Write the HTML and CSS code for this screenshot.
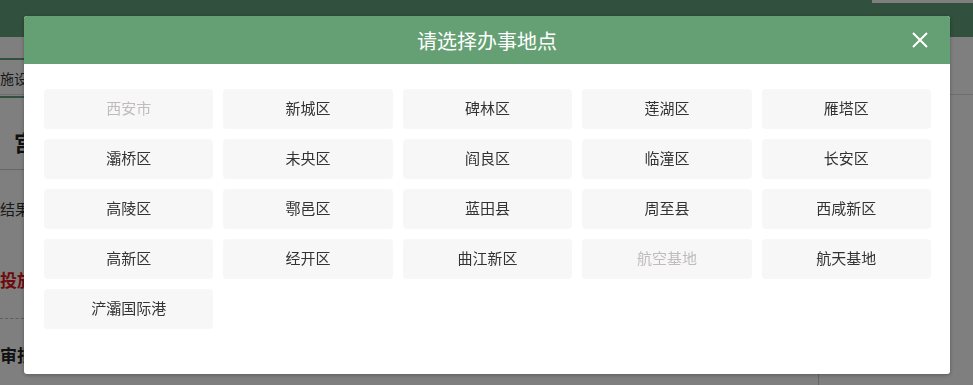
FILE: index.html
```html
<!DOCTYPE html>
<html lang="zh-CN">
<head>
    <meta charset="UTF-8">
    <meta name="viewport" content="width=device-width, initial-scale=1.0">
    <title>请选择办事地点</title>
    <link rel="stylesheet" href="styles.css">
</head>
<body>
    <!-- 背景页面 -->
    <div class="page">
        <div class="top-strip"></div>
        <header class="page-header"></header>
        <div class="tab-row">
            <span class="tab">施设</span>
        </div>
        <div class="page-body">
            <div class="page-main">
                <h3 class="big-title">宫</h3>
                <p class="row-text">结果</p>
                <p class="red-text">投施</p>
                <p class="bold-text">审批</p>
            </div>
            <div class="page-side"></div>
        </div>
    </div>

    <!-- 遮罩层 -->
    <div class="mask"></div>

    <!-- 弹窗 -->
    <div class="dialog">
        <div class="dialog-header">
            <h2>请选择办事地点</h2>
            <span class="dialog-close">
                <svg width="18" height="18" viewBox="0 0 18 18">
                    <path d="M2 2 L16 16 M16 2 L2 16" stroke="#fff" stroke-width="2" fill="none"/>
                </svg>
            </span>
        </div>
        <div class="dialog-body">
            <ul class="area-list">
                <li class="area disabled">西安市</li>
                <li class="area">新城区</li>
                <li class="area">碑林区</li>
                <li class="area">莲湖区</li>
                <li class="area">雁塔区</li>
                <li class="area">灞桥区</li>
                <li class="area">未央区</li>
                <li class="area">阎良区</li>
                <li class="area">临潼区</li>
                <li class="area">长安区</li>
                <li class="area">高陵区</li>
                <li class="area">鄠邑区</li>
                <li class="area">蓝田县</li>
                <li class="area">周至县</li>
                <li class="area">西咸新区</li>
                <li class="area">高新区</li>
                <li class="area">经开区</li>
                <li class="area">曲江新区</li>
                <li class="area disabled">航空基地</li>
                <li class="area">航天基地</li>
                <li class="area">浐灞国际港</li>
            </ul>
        </div>
    </div>
</body>
</html>
```

FILE: styles.css
```css
* {
    box-sizing: border-box;
    margin: 0;
    padding: 0;
}

body {
    font-family: "Microsoft YaHei", "Noto Sans CJK SC", sans-serif;
    background: #fff;
    height: 385px;
    overflow: hidden;
}

/* 背景页面 */
.page {
    position: relative;
    height: 385px;
}

.top-strip {
    position: absolute;
    top: 0;
    right: 0;
    width: 101px;
    height: 3px;
    background: #fff;
}

.page-header {
    height: 37px;
    background: #65a07c;
}

.tab-row {
    height: 58px;
    display: flex;
    align-items: flex-start;
    padding-top: 21px;
    border-bottom: 1px solid #dcdcdc;
}

.tab {
    display: block;
    border-top: 2px solid #65a07c;
    border-bottom: 2px solid #65a07c;
    padding: 8px 0;
    width: 24px;
    font-size: 14px;
    color: #333;
    white-space: nowrap;
}

.page-body {
    display: flex;
}

.page-main {
    flex: 1;
}

.page-side {
    width: 155px;
    border-left: 1px solid #ccc;
    margin-top: 220px;
    height: 70px;
}

.big-title {
    font-size: 22px;
    font-weight: bold;
    color: #222;
    padding: 30px 0 12px 14px;
    border-bottom: 1px solid #ccc;
    width: 60px;
}

.row-text {
    font-size: 15px;
    color: #333;
    padding: 28px 0 0 0;
}

.red-text {
    font-size: 17px;
    font-weight: bold;
    color: #e01414;
    padding: 48px 0 26px 0;
    border-bottom: 1px dashed #bbb;
    width: 60px;
}

.bold-text {
    font-size: 17px;
    font-weight: bold;
    color: #222;
    padding-top: 23px;
}

/* 遮罩层 */
.mask {
    position: fixed;
    inset: 0;
    background: rgba(0, 0, 0, 0.5);
}

/* 弹窗 */
.dialog {
    position: fixed;
    top: 16px;
    left: 24px;
    width: 926px;
    background: #fff;
    border-radius: 3px;
    overflow: hidden;
    box-shadow: 0 1px 4px rgba(0, 0, 0, 0.3);
}

.dialog-header {
    position: relative;
    height: 48px;
    background: #65a074;
    display: flex;
    align-items: center;
    justify-content: center;
}

.dialog-header h2 {
    font-size: 20px;
    font-weight: normal;
    color: #fff;
}

.dialog-close {
    position: absolute;
    right: 21px;
    top: 15px;
    width: 18px;
    height: 18px;
    display: flex;
}

.dialog-body {
    padding: 25px 19px 45px 20px;
}

.area-list {
    list-style: none;
    display: grid;
    grid-template-columns: repeat(5, 1fr);
    gap: 10px;
}

.area {
    height: 40px;
    line-height: 38px;
    background: #f7f7f7;
    border-radius: 4px;
    text-align: center;
    font-size: 15px;
    color: #333;
    cursor: pointer;
}

.area.disabled {
    color: #c0bcbc;
    cursor: default;
}
```
